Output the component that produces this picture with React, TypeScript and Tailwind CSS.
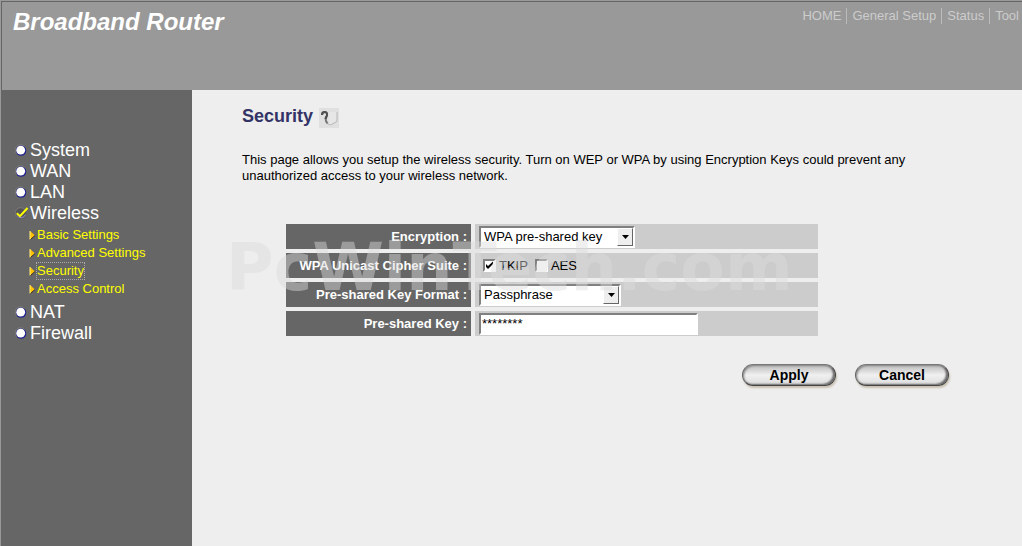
import React, { useState } from 'react';

type MenuItem = {
  label: string;
  children?: string[];
};

const topLinks = ['HOME', 'General Setup', 'Status', 'Tool'];

const menu: MenuItem[] = [
  { label: 'System' },
  { label: 'WAN' },
  { label: 'LAN' },
  { label: 'Wireless', children: ['Basic Settings', 'Advanced Settings', 'Security', 'Access Control'] },
  { label: 'NAT' },
  { label: 'Firewall' },
];

const sunken = 'border-2 border-t-[#808080] border-l-[#808080] border-r-white border-b-white bg-white';

const Bullet = ({ checked }: { checked: boolean }) => (
  <svg width="14" height="14" viewBox="0 0 14 14" className="shrink-0" aria-hidden="true">
    <circle cx="6" cy="6.500" r="5.300" fill={checked ? '#555' : '#202090'} />
    <path d="M1.500 9.500A5.300 5.300 0 0 1 9.500 2.400" fill="none" stroke="#777" />
    {checked ? (
      <>
        <path d="M2 8.500A4.700 4.700 0 0 0 10.500 7.500" fill="none" stroke="#9090d0" />
        <path d="M1.800 6.300L5 9.200L12.500 1" fill="none" stroke="#ffff00" strokeWidth="2" />
      </>
    ) : (
      <circle cx="5.700" cy="6.200" r="4.400" fill="#fff" />
    )}
  </svg>
);

const Arrow = () => (
  <svg width="7" height="10" viewBox="0 0 7 10" className="shrink-0" aria-hidden="true">
    <path d="M1 1L6 5.500L1 9.500Z" fill="#ffc000" />
    <path d="M1 1V9.500" stroke="#fff080" />
    <path d="M1.500 9.500L6 5.500" stroke="#333" />
  </svg>
);

const HelpIcon = () => (
  <svg width="20" height="20" viewBox="0 0 20 20" aria-hidden="true">
    <rect width="20" height="20" fill="#e0e0e0" />
    <path d="M10 4L10 17L18 14L18 4" fill="#e6e6e6" />
    <path d="M18 4V13.500L11.500 17L8 15.500" fill="none" stroke="#b8b8b8" />
    <path d="M3 7C3 3 8.500 2.800 8 7C7.800 9.500 6 10 7 13L8.500 15.500" fill="none" stroke="#777" strokeWidth="2" />
    <path d="M3 7C3 3 8.500 2.800 8 7C7.800 9 6.500 9 6.500 11" fill="none" stroke="#505050" strokeWidth="2" />
  </svg>
);

interface SelectBoxProps {
  id: string;
  className: string;
  options: string[];
  value: string;
  onChange: (value: string) => void;
}

const SelectBox = ({ id, className, options, value, onChange }: SelectBoxProps) => (
  <div className={`relative ${className}`}>
    <select
      id={id}
      value={value}
      onChange={(e) => onChange(e.target.value)}
      className={`block h-[22px] w-full appearance-none rounded-none pl-[3px] text-[13px] leading-4 text-black ${sunken}`}
    >
      {options.map((option) => (
        <option key={option}>{option}</option>
      ))}
    </select>
    <span className="pointer-events-none absolute top-0.5 right-0.5 bottom-0.5 flex w-4 items-center justify-center border border-t-white border-l-white border-r-[#666] border-b-[#666] bg-[#eee]">
      <svg width="7" height="4" viewBox="0 0 7 4" aria-hidden="true">
        <path d="M0 0H7L3.500 4Z" fill="#000" />
      </svg>
    </span>
  </div>
);

interface CipherBoxProps {
  id: string;
  label: string;
  checked: boolean;
  onChange: (checked: boolean) => void;
}

const CipherBox = ({ id, label, checked, onChange }: CipherBoxProps) => (
  <span className="flex items-center gap-[3px]">
    <span className="relative block size-[13px]">
      <input
        id={id}
        type="checkbox"
        checked={checked}
        onChange={(e) => onChange(e.target.checked)}
        className={`block size-[13px] appearance-none ${sunken}`}
      />
      {checked && (
        <svg width="13" height="13" viewBox="0 0 13 13" className="pointer-events-none absolute top-0 left-0" aria-hidden="true">
          <path d="M3 5V8L5 10L10 5V2.500L5 7Z" fill="#000" />
        </svg>
      )}
    </span>
    <label htmlFor={id}>{label}</label>
  </span>
);

const FormRow = ({ label, htmlFor, children }: { label: string; htmlFor?: string; children: React.ReactNode }) => (
  <tr className="h-[25px]">
    <th scope="row" className="w-[185px] bg-[#666] p-0 pr-1 text-right font-bold text-white">
      {htmlFor ? <label htmlFor={htmlFor}>{label} :</label> : `${label} :`}
    </th>
    <td className="bg-[#ccc] p-0 pl-1">{children}</td>
  </tr>
);

const PillButton = ({ children }: { children: React.ReactNode }) => (
  <button
    type="button"
    className="h-[22px] w-[94px] rounded-full border border-t-[#777] border-r-[#444] border-b-[#444] border-l-[#666] bg-linear-to-b from-[#bbb] via-[#f0f0f0] to-[#ddd] text-sm leading-4 font-bold text-black shadow-[1px_2px_2px_#c8c0b0,inset_-2px_-1px_2px_#666,inset_1px_1px_2px_#888]"
  >
    {children}
  </button>
);

export default function App() {
  const [encryption, setEncryption] = useState('WPA pre-shared key');
  const [format, setFormat] = useState('Passphrase');
  const [key, setKey] = useState('********');
  const [tkip, setTkip] = useState(true);
  const [aes, setAes] = useState(false);

  return (
    <div className="flex min-h-screen flex-col border-t border-l border-[#999] bg-[#eee] font-['Liberation_Sans',Arial,sans-serif] text-[13px] leading-4 text-black">
      {/* Header */}
      <header className="flex h-[89px] items-start justify-between border-t border-l border-[#666] bg-[#999] pr-[3px] pl-[11px]">
        <h1 className="pt-1.5 text-2xl leading-7 font-bold text-white italic">Broadband Router</h1>
        <nav className="flex pt-1.5 text-[#ccc]">
          {topLinks.map((link, i) => (
            <a key={link} href="#" className={i > 0 ? 'ml-[5px] border-l border-[#bbb] pl-[5px]' : ''}>
              {link}
            </a>
          ))}
        </nav>
      </header>

      <div className="flex grow">
        {/* Side menu */}
        <aside className="w-[191px] shrink-0 bg-[#666] pt-[50px] pl-3.5">
          <ul>
            {menu.map((item) => (
              <li key={item.label}>
                <a href="#" className="flex h-[21px] items-center gap-[1px] text-lg leading-[21px] text-white">
                  <Bullet checked={!!item.children} />
                  {item.label}
                </a>
                {item.children && (
                  <ul className="pt-0.5 pb-1 pl-3.5">
                    {item.children.map((child) => (
                      <li key={child} className="flex h-[18px] items-center gap-[1px]">
                        <Arrow />
                        <a
                          href="#"
                          className={`text-[13px] leading-4 text-[#ff0] ${child === 'Security' ? 'outline-1 outline-[#aaa] outline-dotted' : ''}`}
                        >
                          {child}
                        </a>
                      </li>
                    ))}
                  </ul>
                )}
              </li>
            ))}
          </ul>
        </aside>

        {/* Security settings */}
        <main className="relative grow pt-3.5 pr-[73px] pl-[50px]">
          <h2 className="flex items-center gap-1.5 text-lg leading-6 font-bold text-[#336]">
            Security
            <a href="#" aria-label="Help" className="pt-1">
              <HelpIcon />
            </a>
          </h2>
          <p className="mt-6 max-w-[700px]">
            This page allows you setup the wireless security. Turn on WEP or WPA by using Encryption Keys could prevent any
            unauthorized access to your wireless network.
          </p>

          <table className="mt-9 ml-10 w-[540px] border-separate border-spacing-1">
            <tbody>
              <FormRow label="Encryption" htmlFor="encryption">
                <SelectBox
                  id="encryption"
                  className="w-[156px]"
                  options={['WPA pre-shared key', 'WEP', 'Disable']}
                  value={encryption}
                  onChange={setEncryption}
                />
              </FormRow>
              <FormRow label="WPA Unicast Cipher Suite">
                <div className="flex gap-[7px] pl-1">
                  <CipherBox id="tkip" label="TKIP" checked={tkip} onChange={setTkip} />
                  <CipherBox id="aes" label="AES" checked={aes} onChange={setAes} />
                </div>
              </FormRow>
              <FormRow label="Pre-shared Key Format" htmlFor="format">
                <SelectBox
                  id="format"
                  className="w-[142px]"
                  options={['Passphrase', 'Hex']}
                  value={format}
                  onChange={setFormat}
                />
              </FormRow>
              <FormRow label="Pre-shared Key" htmlFor="key">
                <input
                  id="key"
                  type="text"
                  value={key}
                  onChange={(e) => setKey(e.target.value)}
                  className={`block h-[22px] w-[219px] px-[1px] text-[13px] leading-4 ${sunken}`}
                />
              </FormRow>
            </tbody>
          </table>

          <div className="mt-6 flex justify-end gap-[19px]">
            <PillButton>Apply</PillButton>
            <PillButton>Cancel</PillButton>
          </div>

          {/* Watermark */}
          <div
            aria-hidden="true"
            className="pointer-events-none absolute top-[138px] left-[34px] font-['DejaVu_Sans',sans-serif] text-[65px] leading-[80px] font-bold text-[#dcdcdc] opacity-45"
          >
            PcWinTech.com
          </div>
        </main>
      </div>
    </div>
  );
}
